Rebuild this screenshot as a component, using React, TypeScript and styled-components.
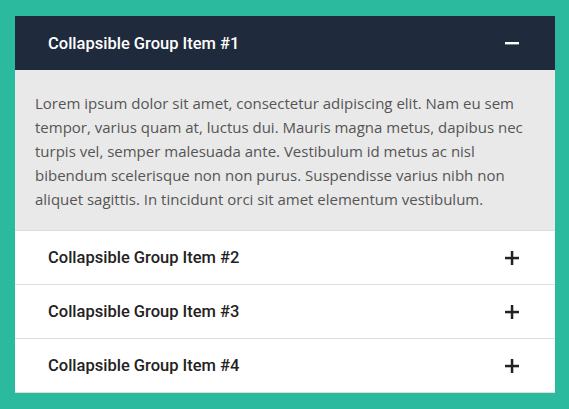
import React, { useState } from "react";
import styled, { createGlobalStyle } from "styled-components";

const GlobalStyle = createGlobalStyle`
  html, body {
    margin: 0;
    padding: 0;
    background: #2bba9e;
  }
  * {
    box-sizing: border-box;
  }
`;

const items = [
  {
    title: "Collapsible Group Item #1",
    body: "Lorem ipsum dolor sit amet, consectetur adipiscing elit. Nam eu sem tempor, varius quam at, luctus dui. Mauris magna metus, dapibus nec turpis vel, semper malesuada ante. Vestibulum id metus ac nisl bibendum scelerisque non non purus. Suspendisse varius nibh non aliquet sagittis. In tincidunt orci sit amet elementum vestibulum.",
  },
  { title: "Collapsible Group Item #2", body: "" },
  { title: "Collapsible Group Item #3", body: "" },
  { title: "Collapsible Group Item #4", body: "" },
];

const App: React.FC = () => {
  const [open, setOpen] = useState(0);

  return (
    <Page>
      <GlobalStyle />
      <Accordion>
        {items.map((item, i) => {
          const active = open === i;
          return (
            <Panel key={item.title}>
              <Heading $active={active} onClick={() => setOpen(active ? -1 : i)}>
                <Title>{item.title}</Title>
                <Toggle $active={active}>{active ? <MinusIcon /> : <PlusIcon />}</Toggle>
              </Heading>
              {active && item.body && <Body>{item.body}</Body>}
            </Panel>
          );
        })}
      </Accordion>
    </Page>
  );
};

export default App;

const MinusIcon = () => (
  <svg width="14" height="14" viewBox="0 0 14 14">
    <rect x="0" y="6" width="14" height="2.4" fill="currentColor" />
  </svg>
);

const PlusIcon = () => (
  <svg width="14" height="14" viewBox="0 0 14 14">
    <rect x="0" y="5.8" width="14" height="2.5" fill="currentColor" />
    <rect x="5.8" y="0" width="2.5" height="14" fill="currentColor" />
  </svg>
);

const Page = styled.div`
  padding: 16px 14px 16px 15px;
`;

const Accordion = styled.div`
  background: #fff;
  width: 540px;
`;

const Panel = styled.div`
  border-bottom: 1px solid #dddddd;
`;

const Heading = styled.div<{ $active: boolean }>`
  display: flex;
  align-items: center;
  justify-content: space-between;
  height: ${(p) => (p.$active ? "54px" : "53px")};
  padding: 0 36px 0 33px;
  background: ${(p) => (p.$active ? "#1f2b3d" : "#fff")};
  color: ${(p) => (p.$active ? "#fff" : "#222")};
  cursor: pointer;
`;

const Title = styled.span`
  font-family: Roboto, "Liberation Sans", sans-serif;
  font-weight: 500;
  font-size: 16.5px;
`;

const Toggle = styled.span<{ $active: boolean }>`
  display: flex;
  color: ${(p) => (p.$active ? "#fff" : "#222")};
`;

const Body = styled.p`
  margin: 0;
  padding: 21px 20px 19px 20px;
  background: #e9e9e9;
  font-family: "Open Sans", "Noto Sans", sans-serif;
  font-size: 15px;
  line-height: 24px;
  color: #555;
`;
